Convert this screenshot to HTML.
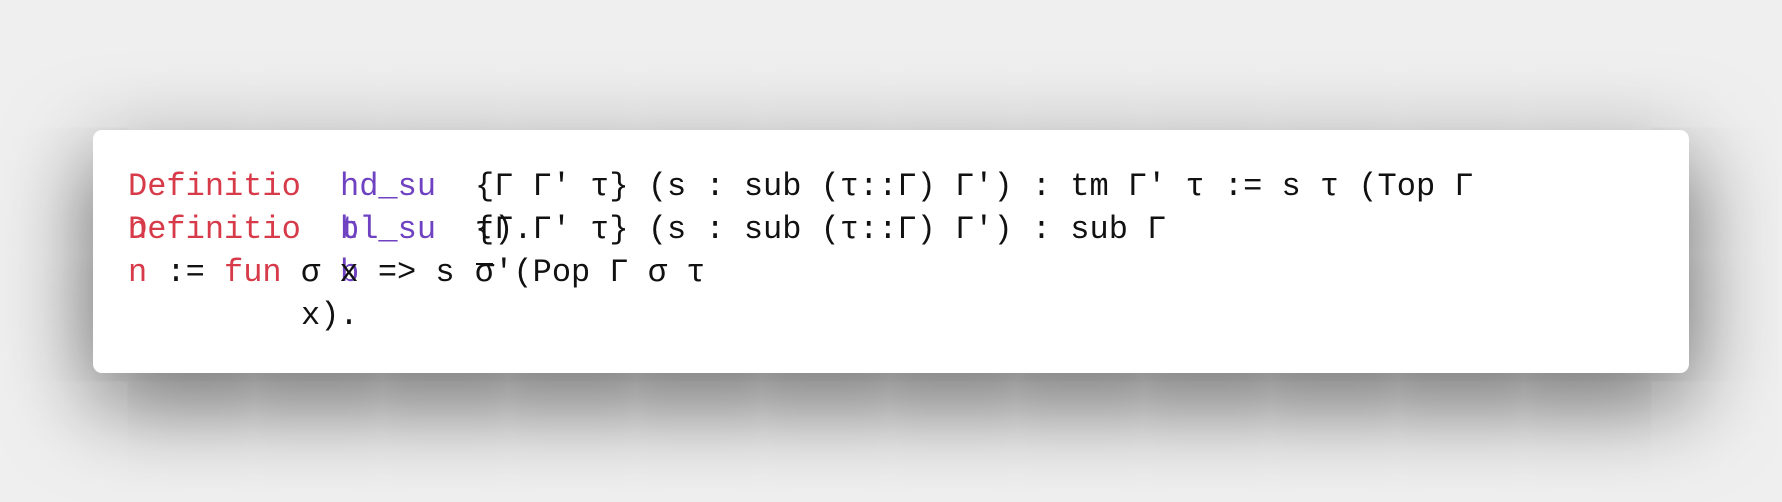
<!DOCTYPE html>
<html><head><meta charset="utf-8"><style>
html,body{margin:0;padding:0;}
body{width:1782px;height:502px;background:#efefef;position:relative;overflow:hidden;}
.card{position:absolute;left:93px;top:130px;width:1596px;height:243px;background:#fff;border-radius:9px;box-shadow:0 28px 90px rgba(0,0,0,0.6);}
.t{position:absolute;font-family:"Liberation Mono","DejaVu Sans Mono",monospace;font-size:32px;line-height:32px;white-space:pre;color:#111;}
.r{color:#d73a49}.p{color:#6f42c1}
</style></head><body>
<div class="card"></div>
<div class="t r" style="left:128px;top:171px">Definitio</div>
<div class="t p" style="left:340px;top:171px">hd_su</div>
<div class="t" style="left:475px;top:171px">{Γ Γ' τ} (s : sub (τ::Γ) Γ') : tm Γ' τ := s τ (Top Γ</div>
<div class="t r" style="left:128px;top:214px">n</div>
<div class="t r" style="left:128px;top:214px">Definitio</div>
<div class="t p" style="left:340px;top:214px">b</div>
<div class="t p" style="left:340px;top:214px">tl_su</div>
<div class="t" style="left:475px;top:214px">τ).</div>
<div class="t" style="left:475px;top:214px">{Γ Γ' τ} (s : sub (τ::Γ) Γ') : sub Γ</div>
<div class="t r" style="left:128px;top:257px">n</div>
<div class="t" style="left:128px;top:257px">  :=</div>
<div class="t r" style="left:128px;top:257px">     fun</div>
<div class="t p" style="left:340px;top:257px">b</div>
<div class="t" style="left:301px;top:257px">σ x => s</div>
<div class="t" style="left:475px;top:257px">σ'(Pop Γ σ τ</div>
<div style="position:absolute;left:476px;top:263px;width:17px;height:2px;background:#111"></div>
<div class="t" style="left:301px;top:300px">x).</div>
</body></html>
